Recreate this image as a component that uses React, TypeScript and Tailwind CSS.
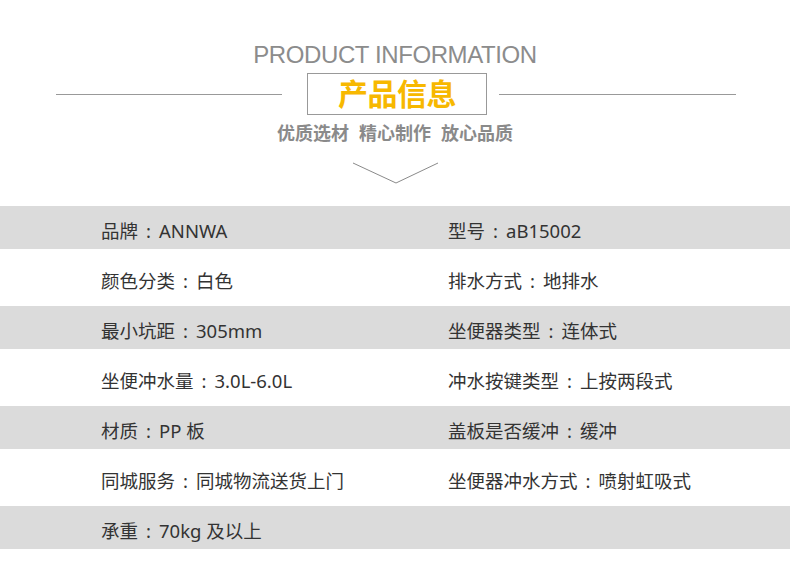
const rows: [string, string, string, string][] = [
  ["品牌", "ANNWA", "型号", "aB15002"],
  ["颜色分类", "白色", "排水方式", "地排水"],
  ["最小坑距", "305mm", "坐便器类型", "连体式"],
  ["坐便冲水量", "3.0L-6.0L", "冲水按键类型", "上按两段式"],
  ["材质", "PP 板", "盖板是否缓冲", "缓冲"],
  ["同城服务", "同城物流送货上门", "坐便器冲水方式", "喷射虹吸式"],
  ["承重", "70kg 及以上", "", ""],
];

function Cell({ label, value }: { label: string; value: string }) {
  if (!label) return null;
  return (
    <span className="whitespace-nowrap">
      {label}
      <span className="inline-block w-[21px] text-center">:</span>
      {value}
    </span>
  );
}

export default function App() {
  return (
    <div
      className="w-[790px] h-[574px] bg-white overflow-hidden"
      style={{ fontFamily: '"Noto Sans", "Noto Sans CJK SC", sans-serif' }}
    >
      {/* Header */}
      <div className="flex flex-col items-center pt-[43px]">
        <div
          className="text-[24px] leading-[24px] text-[#8c8c8c] tracking-[-0.4px]"
          style={{ fontFamily: '"Liberation Sans", Arial, sans-serif' }}
        >
          PRODUCT INFORMATION
        </div>
      </div>

      <div className="flex items-center mt-[6px] h-[42px]">
        <div className="ml-[56px] w-[226px] h-px bg-[#999]" />
        <div className="ml-[25px] w-[180px] h-[42px] border border-[#999] flex items-center justify-center">
          <span className="text-[30px] leading-none font-bold text-[#f7b800] tracking-[-0.5px]">
            产品信息
          </span>
        </div>
        <div className="ml-[12px] w-[237px] h-px bg-[#999]" />
      </div>

      <div className="flex justify-center gap-[10px] mt-[9px] text-[18px] leading-[18px] font-bold text-[#8a8a8a]">
        <span>优质选材</span>
        <span>精心制作</span>
        <span>放心品质</span>
      </div>

      <div className="flex justify-center mt-[20px] h-[24px]">
        <svg width="88" height="24" viewBox="0 0 88 24" className="ml-[2px]">
          <polyline points="1,1 44,21 86,1" fill="none" stroke="#8a8a8a" strokeWidth="1" />
        </svg>
      </div>

      {/* Table */}
      <div className="mt-[20px] text-[18.5px] text-[#333]">
        {rows.map((r, i) => (
          <div
            key={i}
            className={
              i % 2 === 0
                ? "flex items-center h-[43px] pt-[6px] bg-[#dbdbdb]"
                : "flex items-center h-[57px] pt-[6px] bg-white"
            }
          >
            <div className="pl-[101px] w-[448px]">
              <Cell label={r[0]} value={r[1]} />
            </div>
            <div>
              <Cell label={r[2]} value={r[3]} />
            </div>
          </div>
        ))}
      </div>
    </div>
  );
}
